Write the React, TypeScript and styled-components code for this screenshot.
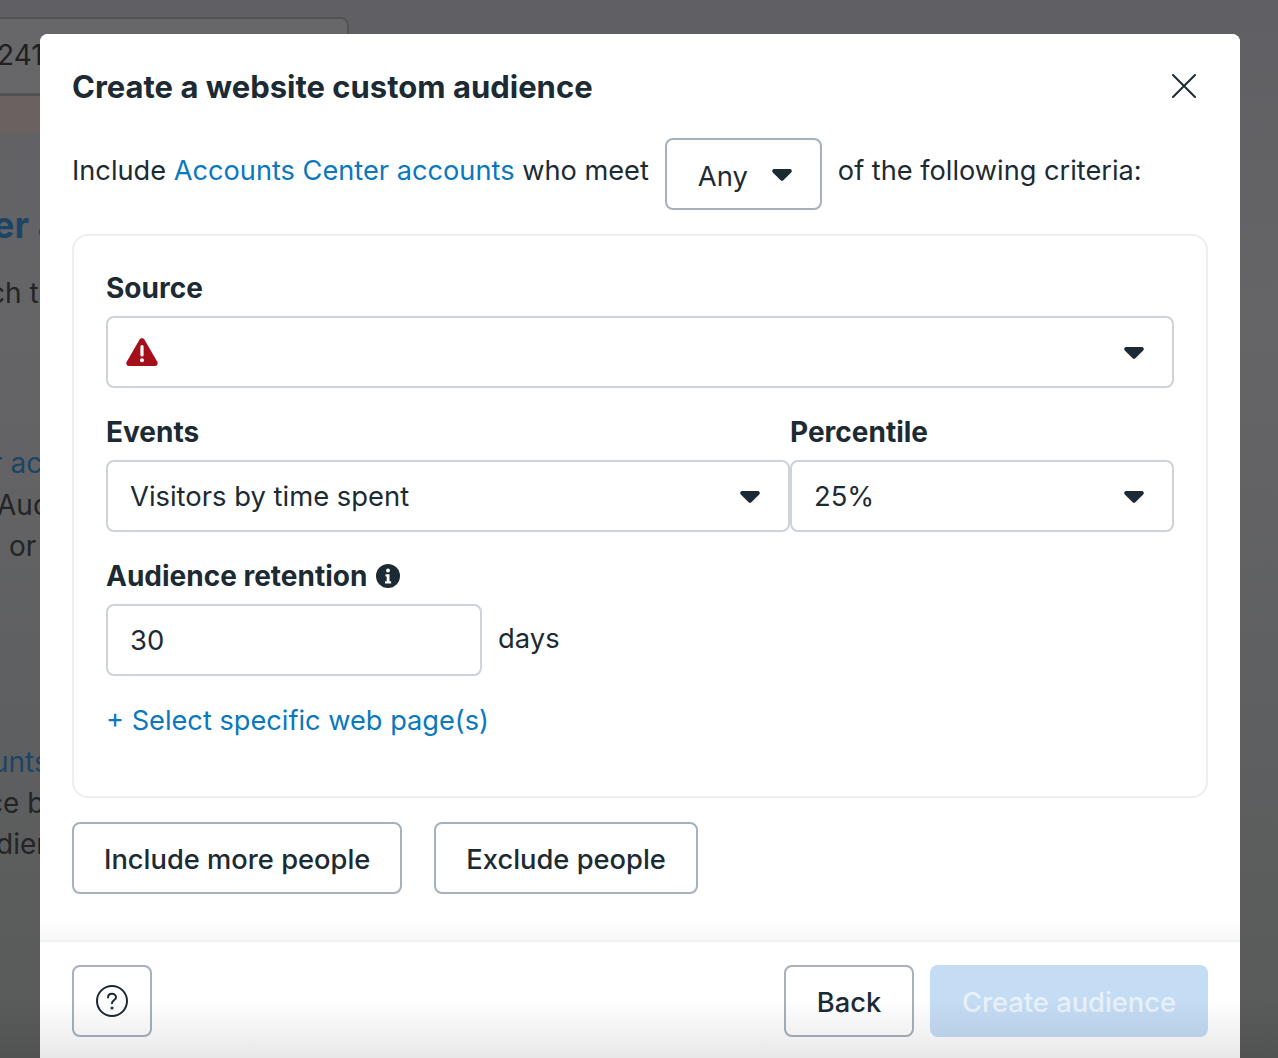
import { FC, ReactNode } from 'react';
import styled, { createGlobalStyle } from 'styled-components';

const GlobalStyle = createGlobalStyle`
    * {
        box-sizing: border-box;
    }
    html,
    body {
        margin: 0;
        padding: 0;
        overflow: hidden;
    }
    body {
        font-family: Inter, "Liberation Sans", sans-serif;
        color: #1c2b33;
    }
`;

const Page = styled.div`
    position: relative;
    width: 1278px;
    height: 1058px;
    overflow: hidden;
    background: linear-gradient(180deg, #605f63 0%, #656568 30%, #5e5f60 70%, #585b5a 100%);
`;

/* what is left of the page under the dialog */
const Behind = styled.div`
    display: flex;
    flex-direction: column;
    height: 100%;
    padding-top: 17px;
`;

const BehindCard = styled.div`
    flex: none;
    width: 357px;
    height: 78px;
    margin-left: -8px;
    padding-left: 3px;
    border: 2px solid #525255;
    border-radius: 8px 8px 0 0;
    background: #676769;
    font-size: 28px;
    line-height: 72px;
    color: #1f2022;
`;

const BehindTint = styled.div`
    flex: none;
    width: 349px;
    height: 38px;
    background: #6a6260;
    border-top: 1px solid #525255;
`;

const BehindLine = styled.div<{ $top: number; $left: number; $blue?: boolean; $bold?: boolean; $big?: boolean }>`
    flex: none;
    margin-top: ${(p) => p.$top}px;
    margin-left: ${(p) => p.$left}px;
    font-size: ${(p) => (p.$big ? 36 : 28)}px;
    font-weight: ${(p) => (p.$bold ? 700 : 400)};
    line-height: 42px;
    white-space: nowrap;
    color: ${(p) => (p.$blue ? '#1c4565' : '#232425')};
`;

const Dialog = styled.div`
    position: absolute;
    top: 34px;
    left: 40px;
    width: 1200px;
    height: 1024px;
    display: flex;
    flex-direction: column;
    background: #ffffff;
    border-radius: 8px 8px 0 0;
`;

const Body = styled.div`
    flex: 1;
    padding: 32px 32px 0;
    border-radius: 8px 8px 0 0;
    background: linear-gradient(180deg, #ffffff calc(100% - 24px), #f8f8f8 100%);
`;

const Header = styled.div`
    display: flex;
    justify-content: space-between;
    align-items: center;
    height: 42px;
`;

const Title = styled.h2`
    margin: 0;
    font-size: 31px;
    font-weight: 700;
    line-height: 42px;
`;

const CloseButton = styled.button`
    display: flex;
    width: 24px;
    height: 24px;
    margin: -2px 12px 0 0;
    padding: 0;
    border: 0;
    background: none;
    color: #1c2b33;
`;

const CriteriaRow = styled.div`
    display: flex;
    align-items: center;
    gap: 16px;
    margin-top: 30px;
    font-size: 27.2px;
    line-height: 36px;
`;

const RowText = styled.span`
    margin-bottom: 6px;
`;

const Link = styled.a`
    color: #0a78be;
    text-decoration: none;
`;

const CaretIcon = styled.svg`
    flex: none;
    margin-top: 1px;
    fill: #1c2b33;
`;

const SelectBox = styled.div<{ $width?: number; $left?: number }>`
    display: flex;
    align-items: center;
    justify-content: space-between;
    flex: ${(p) => (p.$width ? `0 0 ${p.$width}px` : '1')};
    height: 72px;
    padding: 0 28px 0 ${(p) => p.$left ?? 22}px;
    border: 2px solid #ccd4da;
    border-radius: 8px;
    font-size: 27.4px;
    background: #ffffff;
`;

const AnyBox = styled(SelectBox)`
    border-color: #a7b1bc;
    padding-top: 3px;
    ${CaretIcon} {
        margin-top: -2px;
    }
`;

const Criteria = styled.div`
    display: flex;
    flex-direction: column;
    gap: 22px;
    height: 564px;
    margin-top: 24px;
    padding: 30px 32px 0;
    border: 2px solid #eceef0;
    border-radius: 16px;
`;

const Label = styled.div`
    display: flex;
    align-items: center;
    gap: 9px;
    height: 44px;
    margin-bottom: 6px;
    font-size: 28px;
    font-weight: 700;
`;

const Field = styled.div<{ $width?: number }>`
    flex: ${(p) => (p.$width ? `0 0 ${p.$width}px` : '1')};
`;

const Block = styled.div``;

const FieldRow = styled.div`
    display: flex;
`;

const DaysRow = styled.div`
    display: flex;
    align-items: center;
    gap: 16px;
    font-size: 27.4px;
`;

const DaysInput = styled.div`
    display: flex;
    align-items: center;
    width: 376px;
    height: 72px;
    padding-left: 22px;
    border: 2px solid #ccd4da;
    border-radius: 8px;
`;

const DaysUnit = styled.span`
    margin-top: -4px;
`;

const AddLink = styled(Link)`
    display: block;
    margin-top: 2px;
    font-size: 27.2px;
    line-height: 42px;
`;

const Actions = styled.div`
    display: flex;
    gap: 32px;
    margin-top: 24px;
`;

const Button = styled.button`
    height: 72px;
    padding: 2px 30px 0;
    border: 2px solid #a7b1bc;
    border-radius: 8px;
    background: transparent;
    font-family: inherit;
    font-size: 27.3px;
    font-weight: 500;
    color: #1c2b33;
`;

const HelpButton = styled(Button)`
    display: flex;
    align-items: center;
    justify-content: center;
    width: 80px;
    padding: 0;
`;

const BackButton = styled(Button)`
    width: 130px;
    padding: 2px 0 0;
`;

const PrimaryButton = styled(Button)`
    width: 278px;
    padding: 2px 0 0;
    border: 0;
    background: #c4dcf4;
    color: #e9f2fb;
`;

const Footer = styled.div`
    display: flex;
    align-items: flex-start;
    gap: 16px;
    height: 118px;
    padding: 23px 32px 0;
    border-top: 2px solid #f0f1f2;
`;

const FooterSpacer = styled.div`
    flex: 1;
`;

/* grey haze along the bottom edge of the window */
const BottomFade = styled.div`
    position: absolute;
    left: 0;
    right: 0;
    bottom: 0;
    height: 60px;
    pointer-events: none;
    background: linear-gradient(180deg, rgba(0, 0, 0, 0) 0%, rgba(0, 0, 0, 0.09) 100%);
`;

const Caret: FC = () => (
    <CaretIcon width="20" height="12" viewBox="0 0 20 12">
        <path d="M2.2 0h15.6c1.8 0 2.7 2.1 1.4 3.4l-7.8 7.8c-.8.8-2 .8-2.8 0L.8 3.4C-.5 2.1.4 0 2.2 0z" />
    </CaretIcon>
);

const Select: FC<{ children?: ReactNode; width?: number }> = ({ children, width }) => (
    <SelectBox $width={width}>
        <span>{children}</span>
        <Caret />
    </SelectBox>
);

const Warning: FC = () => (
    <svg width="32" height="28" viewBox="0 0 32 28" style={{ display: 'block' }}>
        <path
            d="M13.6 1.5c1-1.8 3.8-1.8 4.8 0l13 22.4c1 1.8-.3 4.1-2.4 4.1H3c-2.1 0-3.4-2.3-2.4-4.1z"
            fill="#a50f1c"
        />
        <rect x="14.4" y="7" width="3.2" height="11.5" rx="1.6" fill="#ffffff" />
        <circle cx="16" cy="22.3" r="2" fill="#ffffff" />
    </svg>
);

const App: FC = () => {
    return (
        <Page>
            <GlobalStyle />
            <Behind>
                <BehindCard>2410</BehindCard>
                <BehindTint />
                <BehindLine $top={71} $left={-7} $blue $bold $big>
                    er a
                </BehindLine>
                <BehindLine $top={26} $left={-11}>
                    ch t
                </BehindLine>
                <BehindLine $top={128} $left={-8} $blue>
                    r ac
                </BehindLine>
                <BehindLine $top={0} $left={-3}>
                    Aud
                </BehindLine>
                <BehindLine $top={-1} $left={-7}>
                    : or
                </BehindLine>
                <BehindLine $top={174} $left={-8} $blue>
                    unts
                </BehindLine>
                <BehindLine $top={-1} $left={-13}>
                    ce b
                </BehindLine>
                <BehindLine $top={-1} $left={-4}>
                    dien
                </BehindLine>
                <BehindLine $top={178} $left={-10}>
                    ng s
                </BehindLine>
            </Behind>
            <Dialog>
                <Body>
                    <Header>
                        <Title>Create a website custom audience</Title>
                        <CloseButton aria-label="Close">
                            <svg width="24" height="24" viewBox="0 0 24 24" fill="none" stroke="currentColor" strokeWidth="2" strokeLinecap="round">
                                <path d="M1 1l22 22M23 1L1 23" />
                            </svg>
                        </CloseButton>
                    </Header>
                    <CriteriaRow>
                        <RowText>
                            Include <Link>Accounts Center accounts</Link> who meet
                        </RowText>
                        <AnyBox $width={157} $left={31}>
                            <span>Any</span>
                            <Caret />
                        </AnyBox>
                        <RowText>of the following criteria:</RowText>
                    </CriteriaRow>
                    <Criteria>
                        <Block>
                            <Label>Source</Label>
                            <SelectBox $left={18}>
                                <Warning />
                                <Caret />
                            </SelectBox>
                        </Block>
                        <FieldRow>
                            <Field>
                                <Label>Events</Label>
                                <Select>Visitors by time spent</Select>
                            </Field>
                            <Field $width={384}>
                                <Label>Percentile</Label>
                                <Select>25%</Select>
                            </Field>
                        </FieldRow>
                        <Block>
                            <Label>
                                Audience retention
                                <svg width="24" height="24" viewBox="0 0 24 24">
                                    <circle cx="12" cy="12" r="12" fill="#1c2b33" />
                                    <circle cx="12" cy="6.6" r="2" fill="#ffffff" />
                                    <path d="M9.500 10.200h4v7h1.600v2.200H9v-2.200h1.700v-4.800H9.500z" fill="#ffffff" />
                                </svg>
                            </Label>
                            <DaysRow>
                                <DaysInput>30</DaysInput>
                                <DaysUnit>days</DaysUnit>
                            </DaysRow>
                        </Block>
                        <AddLink>+ Select specific web page(s)</AddLink>
                    </Criteria>
                    <Actions>
                        <Button>Include more people</Button>
                        <Button>Exclude people</Button>
                    </Actions>
                </Body>
                <Footer>
                    <HelpButton aria-label="Help">
                        <svg width="32" height="32" viewBox="0 0 32 32" fill="none" stroke="#1c2b33" strokeWidth="2" strokeLinecap="round">
                            <circle cx="16" cy="16" r="15" />
                            <path d="M12 12.500c0-2.400 1.800-3.800 4-3.800s4 1.400 4 3.500c0 3-4 3-4 6" />
                            <circle cx="16" cy="23" r="0.6" fill="#1c2b33" />
                        </svg>
                    </HelpButton>
                    <FooterSpacer />
                    <BackButton>Back</BackButton>
                    <PrimaryButton>Create audience</PrimaryButton>
                </Footer>
            </Dialog>
            <BottomFade />
        </Page>
    );
};

export default App;
